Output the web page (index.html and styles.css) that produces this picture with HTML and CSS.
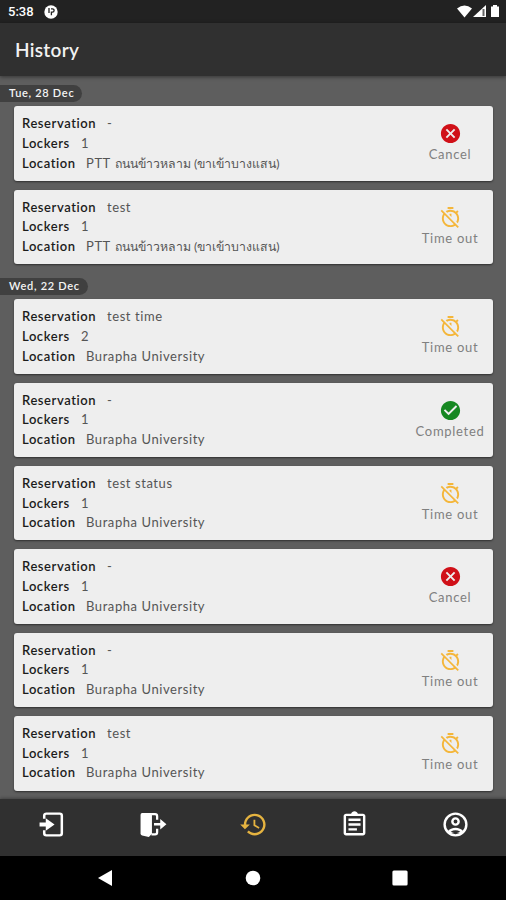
FILE: index.html
```html
<!DOCTYPE html>
<html lang="en">
<head>
    <meta charset="UTF-8" />
    <title>History</title>
    <link rel="stylesheet" href="styles.css">
</head>
<body>
    <!-- icons -->
    <svg class="sprite">
        <symbol id="cancel" viewBox="0 0 24 24"><path d="M12 2C6.47 2 2 6.47 2 12s4.47 10 10 10 10-4.47 10-10S17.53 2 12 2zm5 13.59L15.59 17 12 13.41 8.41 17 7 15.59 10.59 12 7 8.41 8.41 7 12 10.59 15.59 7 17 8.41 13.41 12 17 15.59z"/></symbol>
        <symbol id="done" viewBox="0 0 24 24"><path d="M12 2C6.48 2 2 6.48 2 12s4.48 10 10 10 10-4.48 10-10S17.52 2 12 2zm-2 15l-5-5 1.41-1.41L10 14.17l7.59-7.59L19 8l-9 9z"/></symbol>
        <symbol id="timeout" viewBox="0 0 24 24"><path d="M19.04 4.55l-1.42 1.42C16.07 4.74 14.12 4 12 4c-1.83 0-3.53.55-4.95 1.48l1.46 1.46C9.53 6.35 10.73 6 12 6c3.87 0 7 3.13 7 7 0 1.27-.35 2.47-.94 3.49l1.45 1.45C20.45 16.53 21 14.83 21 13c0-2.12-.74-4.07-1.97-5.61l1.42-1.42-1.41-1.42zM15 1H9v2h6V1zm-4 8.44l2 2V8h-2v1.44zM3.02 4L1.75 5.27 4.5 8.03C3.55 9.45 3 11.16 3 13c0 4.97 4.02 9 9 9 1.84 0 3.55-.55 4.98-1.5l2.5 2.5 1.27-1.27-7.71-7.71L3.02 4zM12 20c-3.87 0-7-3.13-7-7 0-1.28.35-2.48.95-3.52l9.56 9.56c-1.03.61-2.23.96-3.51.96z"/></symbol>
    </svg>

    <div class="status">
        <span class="clock">5:38</span>
        <svg class="app" viewBox="0 0 14 14"><circle cx="7" cy="7" r="6.7" fill="#fff"/><path d="M5 3v5M7 3.8h1.4a1.7 1.7 0 0 1 0 3.4H7.4v3" fill="none" stroke="#222" stroke-width="1.3"/></svg>
        <svg class="signals" viewBox="0 0 44 16">
            <path d="M0 4.4Q7.5-1.4 15 4.4L7.5 13.5z" fill="#fff"/>
            <path d="M29 1v12H16z" fill="#fff"/><path d="M25.5 5h2v7h-2z" fill="#666"/>
            <path d="M34 2.5h2V1h4v1.5h2V13h-8z" fill="#fff"/>
        </svg>
    </div>
    <div class="header">History</div>

    <div class="list">
        <div class="day">Tue, 28 Dec</div>
        <div class="card">
            <div class="info">
                <p><b class="res">Reservation</b><span>-</span></p>
                <p><b class="lock">Lockers</b><span>1</span></p>
                <p><b class="loc">Location</b><span>PTT</span> <span class="thai">ถนนข้าวหลาม (ขาเข้าบางแสน)</span></p>
            </div>
            <div class="state cancel"><svg><use href="#cancel"/></svg>Cancel</div>
        </div>
        <div class="card">
            <div class="info">
                <p><b class="res">Reservation</b><span>test</span></p>
                <p><b class="lock">Lockers</b><span>1</span></p>
                <p><b class="loc">Location</b><span>PTT</span> <span class="thai">ถนนข้าวหลาม (ขาเข้าบางแสน)</span></p>
            </div>
            <div class="state timeout"><svg><use href="#timeout"/></svg>Time out</div>
        </div>

        <div class="day second">Wed, 22 Dec</div>
        <div class="card">
            <div class="info">
                <p><b class="res">Reservation</b><span>test time</span></p>
                <p><b class="lock">Lockers</b><span>2</span></p>
                <p><b class="loc">Location</b><span>Burapha University</span></p>
            </div>
            <div class="state timeout"><svg><use href="#timeout"/></svg>Time out</div>
        </div>
        <div class="card">
            <div class="info">
                <p><b class="res">Reservation</b><span>-</span></p>
                <p><b class="lock">Lockers</b><span>1</span></p>
                <p><b class="loc">Location</b><span>Burapha University</span></p>
            </div>
            <div class="state done"><svg><use href="#done"/></svg>Completed</div>
        </div>
        <div class="card">
            <div class="info">
                <p><b class="res">Reservation</b><span>test status</span></p>
                <p><b class="lock">Lockers</b><span>1</span></p>
                <p><b class="loc">Location</b><span>Burapha University</span></p>
            </div>
            <div class="state timeout"><svg><use href="#timeout"/></svg>Time out</div>
        </div>
        <div class="card">
            <div class="info">
                <p><b class="res">Reservation</b><span>-</span></p>
                <p><b class="lock">Lockers</b><span>1</span></p>
                <p><b class="loc">Location</b><span>Burapha University</span></p>
            </div>
            <div class="state cancel"><svg><use href="#cancel"/></svg>Cancel</div>
        </div>
        <div class="card">
            <div class="info">
                <p><b class="res">Reservation</b><span>-</span></p>
                <p><b class="lock">Lockers</b><span>1</span></p>
                <p><b class="loc">Location</b><span>Burapha University</span></p>
            </div>
            <div class="state timeout"><svg><use href="#timeout"/></svg>Time out</div>
        </div>
        <div class="card">
            <div class="info">
                <p><b class="res">Reservation</b><span>test</span></p>
                <p><b class="lock">Lockers</b><span>1</span></p>
                <p><b class="loc">Location</b><span>Burapha University</span></p>
            </div>
            <div class="state timeout"><svg><use href="#timeout"/></svg>Time out</div>
        </div>
    </div>

    <div class="tabs">
        <svg viewBox="0 0 28 28"><path d="M6 8.5V5.5a2 2 0 0 1 2-2h13a2 2 0 0 1 2 2v17a2 2 0 0 1-2 2H8a2 2 0 0 1-2-2v-3" fill="none" stroke="#fff" stroke-width="2.4"/><path d="M1.5 12h6V8l8.5 6-8.5 6v-4h-6z" fill="#fff"/></svg>
        <svg viewBox="0 0 28 28"><path d="M1.5 4.5Q1.5 3 3 3h9.5v20l-3 3-6.5-1.5q-1.5-.4-1.5-1.8z" fill="#fff"/><path d="M12 4h3.5a2 2 0 0 1 2 2v3.5M12 23.5h3.5a2 2 0 0 0 2-2V18" fill="none" stroke="#fff" stroke-width="2.2"/><path d="M14.5 12.5h6V8.8l6 5-6 5V15h-6z" fill="#fff"/></svg>
        <svg class="active" viewBox="0 0 24 24"><path d="M13 3c-4.97 0-9 4.03-9 9H1l3.89 3.89.07.14L9 12H6c0-3.87 3.13-7 7-7s7 3.13 7 7-3.13 7-7 7c-1.93 0-3.68-.79-4.94-2.06l-1.42 1.42C8.27 19.99 10.51 21 13 21c4.97 0 9-4.03 9-9s-4.03-9-9-9zm-1 5v5l4.28 2.54.72-1.21-3.5-2.08V8H12z" fill="#e5b340"/></svg>
        <svg viewBox="0 0 24 24"><path d="M7 15h7v2H7zm0-4h10v2H7zm0-4h10v2H7zm12-4h-4.18C14.4 1.84 13.3 1 12 1s-2.4.84-2.82 2H5c-1.1 0-2 .9-2 2v14c0 1.1.9 2 2 2h14c1.1 0 2-.9 2-2V5c0-1.1-.9-2-2-2zm0 16H5V5h14z" fill="#fff"/></svg>
        <svg viewBox="0 0 24 24"><g fill="none" stroke="#fff" stroke-width="2"><circle cx="12" cy="12" r="9"/><circle cx="12" cy="9.5" r="2.6"/></g><path d="M5.5 17.5C7 15.7 9.5 14.7 12 14.7s5 1 6.5 2.8l-1.5 1.6H7z" fill="#fff"/><path d="M8 18q4-2.4 8 0-4 2.4-8 0z" fill="#303030"/></svg>
    </div>

    <div class="android">
        <svg viewBox="0 0 16 18"><path d="M14 1v16L0 9z" fill="#fff"/></svg>
        <svg viewBox="0 0 16 18"><circle cx="8" cy="9" r="7.3" fill="#fff"/></svg>
        <svg viewBox="0 0 16 18"><rect x=".4" y="1.4" width="15.2" height="15.2" rx="1.5" fill="#fff"/></svg>
    </div>
</body>
</html>
```
FILE: styles.css
```css
*{
    margin: 0;
    padding: 0;
    box-sizing: border-box;
}
body{
    width: 506px;
    height: 900px;
    overflow: hidden;
    display: flex;
    flex-direction: column;
    background-color: #5e5e5e;
    font-family: Lato, "Noto Sans", sans-serif;
}
svg{
    display: block;
}
.sprite{
    display: none;
}

.status{
    height: 23px;
    flex: none;
    display: flex;
    align-items: center;
    padding: 1px 5px 0 8px;
    background-color: #222;
    color: #fff;
}
.clock{
    font: 500 13px/20px Roboto, sans-serif;
    width: 36px;
}
.app{
    width: 14px;
    height: 14px;
}
.signals{
    width: 44px;
    height: 16px;
    margin-left: auto;
}

.header{
    height: 53px;
    flex: none;
    padding-left: 15px;
    background-color: #303030;
    color: #f2f2f2;
    font-size: 19px;
    font-weight: 600;
    letter-spacing: .3px;
    line-height: 53px;
    box-shadow: 0 1px 4px rgba(0,0,0,.45);
}

.list{
    flex: 1;
    min-height: 0;
    padding: 9px 13px 0 14px;
}
.day{
    width: 82px;
    height: 17px;
    margin: 0 0 4.2px -14px;
    padding-left: 9px;
    border-radius: 0 9px 9px 0;
    background-color: #404040;
    color: #f4f4f4;
    font-size: 11px;
    font-weight: 600;
    letter-spacing: .7px;
    line-height: 16px;
    white-space: nowrap;
}
.second{
    width: 88px;
    margin-top: 13.8px;
    margin-bottom: 4.4px;
}
.card{
    height: 74.4px;
    margin-bottom: 9px;
    padding: 8px;
    display: flex;
    justify-content: space-between;
    border-radius: 3px;
    background-color: #eee;
    box-shadow: 0 1px 2px rgba(0,0,0,.5);
}
.info p{
    height: 19.7px;
    display: flex;
    color: #555;
    font-size: 13px;
    line-height: 19px;
    letter-spacing: .57px;
    white-space: pre;
}
.info b{
    color: #1c1c1c;
    font-weight: 600;
}
.res{
    width: 85px;
}
.lock{
    width: 59px;
}
.loc{
    width: 64px;
}
.thai{
    margin-left: 4px;
    font-size: 12.3px;
    letter-spacing: 0;
}

.state{
    width: 90px;
    margin-right: -10px;
    padding-top: 8px;
    display: flex;
    flex-direction: column;
    align-items: center;
    color: #808080;
    font-size: 13px;
    line-height: 18px;
    letter-spacing: .7px;
}
.state svg{
    width: 23px;
    height: 23px;
}
.cancel svg{
    fill: #d01018;
}
.timeout svg{
    fill: #f4b63a;
}
.done svg{
    fill: #168822;
}

.tabs{
    position: relative;
    height: 57px;
    flex: none;
    display: flex;
    justify-content: space-around;
    padding: 11px 0 0 2px;
    background-color: #303030;
    box-shadow: 0 -1px 3px rgba(0,0,0,.3);
}
.tabs svg{
    width: 29px;
    height: 29px;
}

.android{
    height: 44px;
    flex: none;
    display: flex;
    justify-content: center;
    align-items: center;
    gap: 131px;
    background-color: #000;
}
.android svg{
    width: 16px;
    height: 18px;
}
```
